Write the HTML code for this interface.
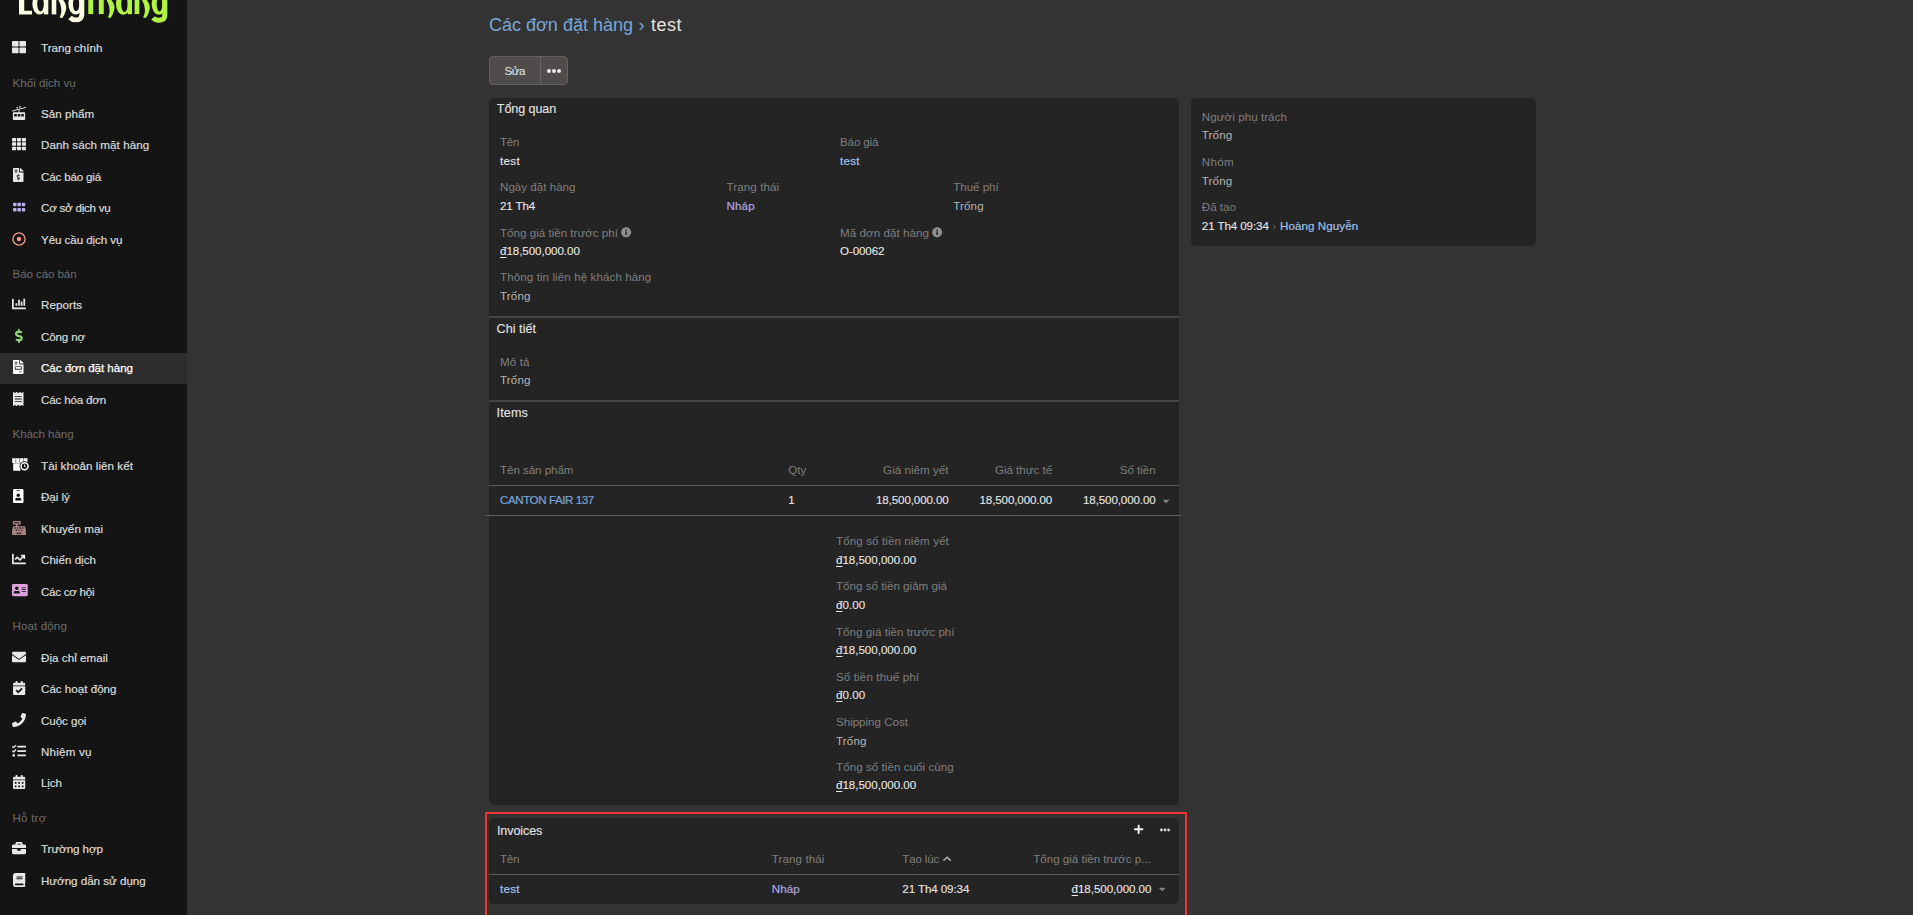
<!DOCTYPE html>
<html lang="vi"><head><meta charset="utf-8"><title>Các đơn đặt hàng › test</title>
<style>
html,body{margin:0;padding:0}
body{width:1913px;height:915px;overflow:hidden;background:#333333;position:relative;font-family:'Liberation Sans', sans-serif;font-size:11px}
.t{position:absolute;white-space:nowrap;line-height:1;}
.b{position:absolute}
svg{position:absolute;overflow:visible}
</style></head><body>
<div class="b" style="left:0;top:0;width:187px;height:915px;background:#141414"></div>
<div class="b" style="left:0;top:353px;width:187px;height:31px;background:#2c2c2c"></div>
<!-- button -->
<div class="b" style="left:488.6px;top:56.4px;width:79.4px;height:28.5px;box-sizing:border-box;background:#504c4b;border:1px solid #64605e;border-radius:4px"></div>
<div class="b" style="left:540px;top:57px;width:1px;height:27.5px;background:#686462"></div>
<!-- panels -->
<div class="b" style="left:488.5px;top:98px;width:690.3px;height:706.8px;background:#242424;border-radius:5px"></div>
<div class="b" style="left:1191px;top:98px;width:345px;height:148px;background:#242424;border-radius:5px"></div>
<div class="b" style="left:488.5px;top:316px;width:690.3px;height:2px;background:#464242"></div>
<div class="b" style="left:488.5px;top:400px;width:690.3px;height:2px;background:#464242"></div>
<div class="b" style="left:488.5px;top:485px;width:690.3px;height:1px;background:#625a5a"></div>
<div class="b" style="left:485.3px;top:515px;width:695.7px;height:1px;background:#625a5a"></div>
<!-- invoices -->
<div class="b" style="left:485px;top:811.8px;width:701.5px;height:120px;box-sizing:border-box;border:2.2px solid #f23434"></div>
<div class="b" style="left:488.5px;top:818.2px;width:690.3px;height:85.9px;background:#242424;border-radius:5px"></div>
<div class="b" style="left:488.5px;top:874px;width:690.3px;height:1px;background:#625a5a"></div>
<svg style="left:11.70px;top:39.70px;color:#e8e8e8" width="14.00" height="14" viewBox="0 0 512 512" fill="currentColor"><rect x="0" y="32" width="240" height="208" rx="24"/><rect x="272" y="32" width="240" height="208" rx="24"/><rect x="0" y="272" width="240" height="208" rx="24"/><rect x="272" y="272" width="240" height="208" rx="24"/></svg>
<svg style="left:11.70px;top:105.70px;color:#e8e8e8" width="14.00" height="14" viewBox="0 0 512 512" fill="currentColor"><path d="M288 64c17.700 0 32-14.300 32-32S305.700 0 288 0s-32 14.300-32 32 14.300 32 32 32zm223.500-12.100c-2.300-8.600-11-13.600-19.600-11.300l-480 128c-8.500 2.300-13.600 11-11.300 19.600C2.500 195.300 8.900 200 16 200c1.400 0 2.800-.200 4.100-.500L240 140.800V224H64c-17.700 0-32 14.300-32 32v224c0 17.700 14.300 32 32 32h384c17.700 0 32-14.300 32-32V256c0-17.700-14.300-32-32-32H272v-91.700l228.100-60.800c8.600-2.300 13.600-11.100 11.400-19.600zM176 384H80v-96h96v96zm160-96h96v96h-96v-96zm-32 0v96h-96v-96h96zM192 96c17.700 0 32-14.300 32-32s-14.300-32-32-32-32 14.300-32 32 14.300 32 32 32z"/></svg>
<svg style="left:11.70px;top:136.70px;color:#e8e8e8" width="14.00" height="14" viewBox="0 0 512 512" fill="currentColor"><rect x="0" y="32" width="149.33" height="128" rx="24"/><rect x="0" y="192" width="149.33" height="128" rx="24"/><rect x="0" y="352" width="149.33" height="128" rx="24"/><rect x="181.33" y="32" width="149.33" height="128" rx="24"/><rect x="181.33" y="192" width="149.33" height="128" rx="24"/><rect x="181.33" y="352" width="149.33" height="128" rx="24"/><rect x="362.67" y="32" width="149.33" height="128" rx="24"/><rect x="362.67" y="192" width="149.33" height="128" rx="24"/><rect x="362.67" y="352" width="149.33" height="128" rx="24"/></svg>
<svg style="left:13.45px;top:168.10px;color:#e8e8e8" width="10.50" height="14" viewBox="0 0 384 512" fill="currentColor"><path d="M377 105L279.100 7c-4.500-4.500-10.600-7-17-7H256v128h128v-6.100c0-6.300-2.500-12.400-7-16.900zm-153 31V0H24C10.700 0 0 10.700 0 24v464c0 13.300 10.700 24 24 24h336c13.300 0 24-10.700 24-24V160H248c-13.200 0-24-10.800-24-24zM64 72c0-4.400 3.600-8 8-8h80c4.400 0 8 3.600 8 8v16c0 4.400-3.600 8-8 8H72c-4.400 0-8-3.600-8-8V72zm0 80v-16c0-4.400 3.600-8 8-8h80c4.400 0 8 3.600 8 8v16c0 4.400-3.600 8-8 8H72c-4.400 0-8-3.600-8-8zm144 263.900V440c0 4.400-3.600 8-8 8h-16c-4.400 0-8-3.600-8-8v-24.300c-11.300-.600-22.300-4.500-31.400-11.300-3.900-2.900-4.100-8.800-.600-12.100l11.800-11.200c2.800-2.600 6.900-2.800 10.100-.700 3.900 2.400 8.300 3.700 12.800 3.700h28.100c6.500 0 11.800-5.900 11.800-13.200 0-6-3.600-11.200-8.800-12.700l-45-13.500c-18.600-5.600-31.600-23.400-31.600-43.400 0-24.500 19.100-44.400 42.700-45.100V232c0-4.400 3.600-8 8-8h16c4.400 0 8 3.600 8 8v24.300c11.300.600 22.300 4.500 31.400 11.300 3.900 2.900 4.100 8.800.600 12.100l-11.800 11.200c-2.800 2.600-6.900 2.800-10.100.700-3.900-2.400-8.300-3.700-12.800-3.700h-28.100c-6.500 0-11.800 5.900-11.800 13.200 0 6 3.600 11.200 8.800 12.700l45 13.500c18.600 5.600 31.600 23.400 31.600 43.400 0 24.500-19.100 44.400-42.700 45.200z"/></svg>
<svg style="left:12.57px;top:199.70px;color:#b9aef2" width="12.25" height="14" viewBox="0 0 448 512" fill="currentColor"><rect x="0" y="96" width="128" height="128" rx="32"/><rect x="0" y="288" width="128" height="128" rx="32"/><rect x="160" y="96" width="128" height="128" rx="32"/><rect x="160" y="288" width="128" height="128" rx="32"/><rect x="320" y="96" width="128" height="128" rx="32"/><rect x="320" y="288" width="128" height="128" rx="32"/></svg>
<svg style="left:11.70px;top:231.70px;color:#f2998e" width="14.00" height="14" viewBox="0 0 512 512" fill="currentColor"><circle cx="256" cy="256" r="224" fill="none" stroke="currentColor" stroke-width="48"/><circle cx="256" cy="256" r="80"/></svg>
<svg style="left:11.70px;top:296.70px;color:#e8e8e8" width="14.00" height="14" viewBox="0 0 512 512" fill="currentColor"><path d="M332.800 320h38.400c6.400 0 12.800-6.400 12.800-12.800V172.800c0-6.400-6.400-12.800-12.800-12.800h-38.400c-6.400 0-12.800 6.400-12.800 12.800v134.400c0 6.400 6.400 12.800 12.800 12.800zm96 0h38.400c6.400 0 12.800-6.400 12.800-12.800V76.800c0-6.400-6.400-12.800-12.800-12.800h-38.400c-6.400 0-12.800 6.400-12.800 12.800v230.400c0 6.400 6.400 12.800 12.800 12.800zm-288 0h38.400c6.400 0 12.800-6.400 12.800-12.800v-70.400c0-6.400-6.400-12.800-12.800-12.800h-38.400c-6.400 0-12.800 6.400-12.800 12.800v70.400c0 6.400 6.400 12.800 12.800 12.800zm96 0h38.400c6.400 0 12.800-6.400 12.800-12.800V108.800c0-6.400-6.400-12.800-12.800-12.800h-38.400c-6.400 0-12.800 6.400-12.800 12.800v198.400c0 6.400 6.400 12.800 12.800 12.800zM496 384H64V80c0-8.840-7.160-16-16-16H16C7.160 64 0 71.160 0 80v336c0 17.670 14.330 32 32 32h464c8.840 0 16-7.160 16-16v-32c0-8.840-7.160-16-16-16z"/></svg>
<svg style="left:14.76px;top:328.70px;color:#8fd878" width="7.88" height="14" viewBox="0 0 288 512" fill="currentColor"><path d="M209.200 233.400l-108-31.600C88.700 198.200 80 186.500 80 173.500c0-16.300 13.200-29.500 29.500-29.500h66.300c12.200 0 24.200 3.700 34.200 10.500 6.100 4.100 14.300 3.100 19.500-2l34.800-34c7.100-6.900 6.100-18.400-1.800-24.500C238 74.800 207.400 64.100 176 64V16c0-8.800-7.200-16-16-16h-32c-8.800 0-16 7.200-16 16v48h-2.500C45.800 64-5.400 118.700.5 183.600c4.200 46.100 39.400 83.600 83.800 96.600l102.500 30c12.500 3.700 21.200 15.300 21.200 28.300 0 16.300-13.200 29.500-29.500 29.500h-66.300C100 368 88 364.300 78 357.500c-6.100-4.100-14.300-3.100-19.500 2l-34.800 34c-7.100 6.900-6.100 18.400 1.800 24.500 24.500 19.200 55.100 29.900 86.500 30v48c0 8.800 7.200 16 16 16h32c8.800 0 16-7.200 16-16v-48.200c46.600-.9 90.300-28.600 105.700-72.700 21.500-61.600-14.600-124.800-72.500-141.700z"/></svg>
<svg style="left:13.45px;top:359.70px;color:#ffffff" width="10.50" height="14" viewBox="0 0 384 512" fill="currentColor"><path d="M288 256H96v64h192v-64zm89-151L279.100 7c-4.500-4.500-10.600-7-17-7H256v128h128v-6.100c0-6.300-2.500-12.400-7-16.900zm-153 31V0H24C10.700 0 0 10.700 0 24v464c0 13.300 10.700 24 24 24h336c13.300 0 24-10.700 24-24V160H248c-13.200 0-24-10.800-24-24zM64 72c0-4.420 3.580-8 8-8h80c4.420 0 8 3.580 8 8v16c0 4.420-3.580 8-8 8H72c-4.420 0-8-3.580-8-8V72zm0 64c0-4.420 3.580-8 8-8h80c4.420 0 8 3.580 8 8v16c0 4.420-3.580 8-8 8H72c-4.420 0-8-3.580-8-8v-16zm256 304c0 4.420-3.580 8-8 8h-80c-4.420 0-8-3.580-8-8v-16c0-4.420 3.580-8 8-8h80c4.420 0 8 3.580 8 8v16zm0-200v96c0 8.840-7.160 16-16 16H80c-8.840 0-16-7.160-16-16v-96c0-8.840 7.160-16 16-16h224c8.840 0 16 7.160 16 16z"/></svg>
<svg style="left:13.45px;top:391.70px;color:#e8e8e8" width="10.50" height="14" viewBox="0 0 384 512" fill="currentColor"><path d="M358.400 3.200L320 48 265.600 3.200a15.900 15.900 0 0 0-19.200 0L192 48 137.600 3.200a15.900 15.900 0 0 0-19.200 0L64 48 25.600 3.200C15-4.700 0 2.800 0 16v480c0 13.200 15 20.700 25.600 12.800L64 464l54.400 44.800a15.900 15.900 0 0 0 19.200 0L192 464l54.400 44.800a15.900 15.900 0 0 0 19.200 0L320 464l38.400 44.800c10.500 7.900 25.600.4 25.600-12.800V16c0-13.200-15-20.700-25.600-12.800zM320 360c0 4.400-3.600 8-8 8H72c-4.400 0-8-3.600-8-8v-16c0-4.400 3.600-8 8-8h240c4.400 0 8 3.600 8 8v16zm0-96c0 4.400-3.600 8-8 8H72c-4.400 0-8-3.600-8-8v-16c0-4.400 3.600-8 8-8h240c4.400 0 8 3.600 8 8v16zm0-96c0 4.400-3.600 8-8 8H72c-4.400 0-8-3.600-8-8v-16c0-4.400 3.600-8 8-8h240c4.400 0 8 3.600 8 8v16z"/></svg>
<svg style="left:11.60px;top:457.70px;color:#ffffff" width="17.50" height="14" viewBox="0 0 640 512" fill="currentColor"><path d="M8 13h126v150a24 24 0 0 1-24 24H32a24 24 0 0 1-24-24z M152 13h126v150a24 24 0 0 1-24 24h-78a24 24 0 0 1-24-24z M296 13h126v150a24 24 0 0 1-24 24h-78a24 24 0 0 1-24-24z M440 13h126v150a24 24 0 0 1-24 24h-78a24 24 0 0 1-24-24z"/><path d="M44 196h270v252a16 16 0 0 1-16 16H60a16 16 0 0 1-16-16z"/><circle cx="460" cy="304" r="186" fill="#141414"/><circle cx="460" cy="304" r="128" fill="none" stroke="currentColor" stroke-width="54"/><path d="M444 238h32v58l36 28-20 24-48-38z"/></svg>
<svg style="left:13.45px;top:488.70px;color:#ffffff" width="10.50" height="14" viewBox="0 0 384 512" fill="currentColor"><path d="M336 0H48C21.500 0 0 21.500 0 48v416c0 26.500 21.500 48 48 48h288c26.500 0 48-21.500 48-48V48c0-26.500-21.500-48-48-48zM144 32h96c8.800 0 16 7.200 16 16s-7.200 16-16 16h-96c-8.800 0-16-7.200-16-16s7.200-16 16-16zm48 128c35.300 0 64 28.700 64 64s-28.700 64-64 64-64-28.700-64-64 28.700-64 64-64zm112 236.800c0 10.600-10 19.200-22.400 19.200H102.400C90 416 80 407.400 80 396.800v-19.200c0-31.800 30.100-57.600 67.200-57.600h5c12.300 5.100 25.700 8 39.800 8s27.600-2.900 39.800-8h5c37.100 0 67.200 25.800 67.200 57.600v19.200z"/></svg>
<svg style="left:11.70px;top:520.70px;color:#a98282" width="14.00" height="14" viewBox="0 0 512 512" fill="currentColor"><path d="M511.100 378.800l-26.700-160c-2.600-15.400-15.900-26.700-31.600-26.700H208v-64h96c8.800 0 16-7.200 16-16V16c0-8.800-7.200-16-16-16H48c-8.800 0-16 7.200-16 16v96c0 8.800 7.200 16 16 16h96v64H59.100c-15.600 0-29 11.300-31.600 26.700L.8 378.700c-.6 3.500-.9 7-.9 10.500V480c0 17.700 14.300 32 32 32h448c17.700 0 32-14.300 32-32v-90.700c.1-3.500-.2-7-.8-10.500zM280 248c0-8.800 7.200-16 16-16h16c8.800 0 16 7.200 16 16v16c0 8.800-7.200 16-16 16h-16c-8.800 0-16-7.200-16-16v-16zm-32 64h16c8.800 0 16 7.200 16 16v16c0 8.800-7.200 16-16 16h-16c-8.800 0-16-7.200-16-16v-16c0-8.800 7.200-16 16-16zm-32-80c8.800 0 16 7.200 16 16v16c0 8.800-7.200 16-16 16h-16c-8.800 0-16-7.200-16-16v-16c0-8.800 7.200-16 16-16h16zM80 80V48h192v32H80zm40 200h-16c-8.800 0-16-7.200-16-16v-16c0-8.800 7.200-16 16-16h16c8.800 0 16 7.200 16 16v16c0 8.800-7.200 16-16 16zm16 64v-16c0-8.800 7.200-16 16-16h16c8.800 0 16 7.200 16 16v16c0 8.800-7.200 16-16 16h-16c-8.800 0-16-7.200-16-16zm216 112c0 4.400-3.600 8-8 8H168c-4.400 0-8-3.600-8-8v-16c0-4.400 3.600-8 8-8h176c4.400 0 8 3.600 8 8v16zm24-112c0 8.800-7.200 16-16 16h-16c-8.800 0-16-7.200-16-16v-16c0-8.800 7.200-16 16-16h16c8.800 0 16 7.200 16 16v16zm48-80c0 8.800-7.200 16-16 16h-16c-8.800 0-16-7.200-16-16v-16c0-8.800 7.200-16 16-16h16c8.800 0 16 7.200 16 16v16z"/></svg>
<svg style="left:11.70px;top:551.70px;color:#e8e8e8" width="14.00" height="14" viewBox="0 0 512 512" fill="currentColor"><path d="M496 384H64V80c0-8.840-7.160-16-16-16H16C7.160 64 0 71.160 0 80v336c0 17.670 14.330 32 32 32h464c8.840 0 16-7.160 16-16v-32c0-8.840-7.160-16-16-16zM464 96H345.940c-21.380 0-32.090 25.850-16.970 40.970l32.400 32.400L288 242.750l-73.370-73.370c-12.500-12.500-32.760-12.500-45.250 0l-68.690 68.690c-6.250 6.250-6.250 16.380 0 22.630l22.620 22.620c6.250 6.250 16.380 6.250 22.630 0L192 237.250l73.370 73.370c12.500 12.500 32.760 12.500 45.250 0l96-96 32.400 32.400c15.120 15.120 40.970 4.410 40.970-16.970V112c.01-8.840-7.150-16-15.990-16z"/></svg>
<svg style="left:11.73px;top:583.10px;color:#dda0dd" width="15.75" height="14" viewBox="0 0 576 512" fill="currentColor"><path d="M528 32H48C21.500 32 0 53.500 0 80v352c0 26.500 21.500 48 48 48h480c26.500 0 48-21.500 48-48V80c0-26.500-21.500-48-48-48zm-352 96c35.300 0 64 28.700 64 64s-28.700 64-64 64-64-28.700-64-64 28.700-64 64-64zm112 236.800c0 10.600-10 19.200-22.400 19.200H86.400C74 384 64 375.400 64 364.800v-19.200c0-31.800 30.100-57.600 67.200-57.600h5c12.300 5.100 25.700 8 39.800 8s27.600-2.900 39.800-8h5c37.100 0 67.200 25.800 67.200 57.600v19.200zM512 312c0 4.400-3.600 8-8 8H360c-4.400 0-8-3.600-8-8v-16c0-4.400 3.600-8 8-8h144c4.400 0 8 3.600 8 8v16zm0-64c0 4.400-3.600 8-8 8H360c-4.400 0-8-3.600-8-8v-16c0-4.400 3.600-8 8-8h144c4.400 0 8 3.600 8 8v16zm0-64c0 4.400-3.600 8-8 8H360c-4.400 0-8-3.600-8-8v-16c0-4.400 3.600-8 8-8h144c4.400 0 8 3.600 8 8v16z"/></svg>
<svg style="left:11.70px;top:649.70px;color:#e8e8e8" width="14.00" height="14" viewBox="0 0 512 512" fill="currentColor"><path d="M502.300 190.800c3.900-3.100 9.700-.2 9.700 4.700V400c0 26.500-21.500 48-48 48H48c-26.500 0-48-21.500-48-48V195.600c0-5 5.700-7.800 9.700-4.700 22.400 17.400 52.100 39.500 154.100 113.600 21.100 15.400 56.700 47.800 92.200 47.600 35.700.3 72-32.800 92.300-47.600 102-74.100 131.600-96.300 154-113.700zM256 320c23.200.4 56.600-29.200 73.400-41.400 132.700-96.300 142.800-104.700 173.400-128.700 5.800-4.500 9.200-11.500 9.200-18.900v-19c0-26.500-21.500-48-48-48H48C21.500 64 0 85.500 0 112v19c0 7.400 3.400 14.300 9.200 18.900 30.600 23.900 40.700 32.400 173.400 128.700 16.800 12.200 50.200 41.800 73.400 41.400z"/></svg>
<svg style="left:12.57px;top:680.70px;color:#e8e8e8" width="12.25" height="14" viewBox="0 0 448 512" fill="currentColor"><path d="M436 160H12c-6.627 0-12-5.373-12-12v-36c0-26.510 21.490-48 48-48h48V12c0-6.627 5.373-12 12-12h40c6.627 0 12 5.373 12 12v52h128V12c0-6.627 5.373-12 12-12h40c6.627 0 12 5.373 12 12v52h48c26.510 0 48 21.490 48 48v36c0 6.627-5.373 12-12 12zM12 192h424c6.627 0 12 5.373 12 12v260c0 26.510-21.490 48-48 48H48c-26.510 0-48-21.490-48-48V204c0-6.627 5.373-12 12-12zm333.296 95.947l-28.169-28.398c-4.667-4.705-12.265-4.736-16.970-.068L194.120 364.665l-45.980-46.352c-4.667-4.705-12.266-4.736-16.971-.068l-28.397 28.170c-4.705 4.667-4.736 12.265-.068 16.970l82.601 83.269c4.667 4.705 12.265 4.736 16.970.068l142.953-141.805c4.705-4.667 4.736-12.265.068-16.970z"/></svg>
<svg style="left:11.70px;top:712.70px;color:#e8e8e8" width="14.00" height="14" viewBox="0 0 512 512" fill="currentColor"><path d="M493.400 24.600l-104-24c-11.300-2.600-22.900 3.300-27.500 13.900l-48 112c-4.200 9.800-1.400 21.300 6.900 28l60.600 49.600c-36 76.700-98.900 140.500-177.200 177.200l-49.600-60.600c-6.800-8.300-18.200-11.100-28-6.900l-112 48C3.900 366.500-2 378.100.6 389.400l24 104C27.100 504.200 36.700 512 48 512c256.100 0 464-207.500 464-464 0-11.200-7.700-20.900-18.600-23.400z"/></svg>
<svg style="left:11.70px;top:743.70px;color:#e8e8e8" width="14.00" height="14" viewBox="0 0 512 512" fill="currentColor"><path d="M139.610 35.500a12 12 0 0 0-17 0L58.930 98.810l-22.700-22.120a12 12 0 0 0-17 0L3.530 92.410a12 12 0 0 0 0 17l47.590 47.400a12.780 12.780 0 0 0 17.610 0l15.590-15.620L156.520 69a12.090 12.090 0 0 0 .09-17zm0 159.190a12 12 0 0 0-17 0l-63.680 63.720-22.700-22.100a12 12 0 0 0-17 0L3.530 252a12 12 0 0 0 0 17L51 316.500a12.770 12.770 0 0 0 17.600 0l15.700-15.690 72.200-72.220a12 12 0 0 0 .09-16.900zM64 368c-26.490 0-48.590 21.500-48.590 48S37.530 464 64 464a48 48 0 0 0 0-96zm432 16H208a16 16 0 0 0-16 16v32a16 16 0 0 0 16 16h288a16 16 0 0 0 16-16v-32a16 16 0 0 0-16-16zm0-320H208a16 16 0 0 0-16 16v32a16 16 0 0 0 16 16h288a16 16 0 0 0 16-16V80a16 16 0 0 0-16-16zm0 160H208a16 16 0 0 0-16 16v32a16 16 0 0 0 16 16h288a16 16 0 0 0 16-16v-32a16 16 0 0 0-16-16z"/></svg>
<svg style="left:12.57px;top:774.70px;color:#e8e8e8" width="12.25" height="14" viewBox="0 0 448 512" fill="currentColor"><path d="M0 464c0 26.500 21.500 48 48 48h352c26.500 0 48-21.500 48-48V192H0v272zm320-196c0-6.600 5.400-12 12-12h40c6.600 0 12 5.400 12 12v40c0 6.600-5.400 12-12 12h-40c-6.600 0-12-5.400-12-12v-40zm0 128c0-6.600 5.400-12 12-12h40c6.600 0 12 5.400 12 12v40c0 6.600-5.400 12-12 12h-40c-6.600 0-12-5.400-12-12v-40zM192 268c0-6.600 5.400-12 12-12h40c6.600 0 12 5.400 12 12v40c0 6.600-5.400 12-12 12h-40c-6.600 0-12-5.400-12-12v-40zm0 128c0-6.600 5.400-12 12-12h40c6.600 0 12 5.400 12 12v40c0 6.600-5.400 12-12 12h-40c-6.600 0-12-5.400-12-12v-40zM64 268c0-6.600 5.400-12 12-12h40c6.600 0 12 5.400 12 12v40c0 6.600-5.400 12-12 12H76c-6.600 0-12-5.400-12-12v-40zm0 128c0-6.600 5.400-12 12-12h40c6.600 0 12 5.400 12 12v40c0 6.600-5.400 12-12 12H76c-6.600 0-12-5.400-12-12v-40zM400 64h-48V16c0-8.800-7.200-16-16-16h-32c-8.800 0-16 7.200-16 16v48H160V16c0-8.800-7.200-16-16-16h-32c-8.800 0-16 7.200-16 16v48H48C21.500 64 0 85.500 0 112v48h448v-48c0-26.500-21.500-48-48-48z"/></svg>
<svg style="left:11.70px;top:840.70px;color:#e8e8e8" width="14.00" height="14" viewBox="0 0 512 512" fill="currentColor"><path d="M320 336c0 8.840-7.160 16-16 16h-96c-8.840 0-16-7.160-16-16v-48H0v144c0 25.600 22.400 48 48 48h416c25.600 0 48-22.400 48-48V288H320v48zm144-208h-80V80c0-25.600-22.400-48-48-48H176c-25.600 0-48 22.400-48 48v48H48c-25.600 0-48 22.400-48 48v80h512v-80c0-25.600-22.400-48-48-48zm-144 0H192V96h128v32z"/></svg>
<svg style="left:12.57px;top:872.70px;color:#e8e8e8" width="12.25" height="14" viewBox="0 0 448 512" fill="currentColor"><path d="M448 360V24c0-13.300-10.700-24-24-24H96C43 0 0 43 0 96v320c0 53 43 96 96 96h328c13.300 0 24-10.700 24-24v-16c0-7.500-3.500-14.300-8.900-18.700-4.200-15.400-4.200-59.300 0-74.700 5.400-4.300 8.900-11.100 8.900-18.600zM128 134c0-3.300 2.700-6 6-6h212c3.300 0 6 2.700 6 6v20c0 3.300-2.700 6-6 6H134c-3.300 0-6-2.700-6-6v-20zm0 64c0-3.300 2.700-6 6-6h212c3.300 0 6 2.700 6 6v20c0 3.300-2.700 6-6 6H134c-3.300 0-6-2.700-6-6v-20zm253.400 250H96c-17.700 0-32-14.300-32-32 0-17.600 14.400-32 32-32h285.400c-1.900 17.100-1.900 46.900 0 64z"/></svg>
<svg style="left:620.85px;top:227.00px;color:#8f8f8f" width="10.30" height="10.3" viewBox="0 0 512 512" fill="currentColor"><path d="M256 8C119.043 8 8 119.083 8 256c0 136.997 111.043 248 248 248s248-111.003 248-248C504 119.083 392.957 8 256 8zm0 110c23.196 0 42 18.804 42 42s-18.804 42-42 42-42-18.804-42-42 18.804-42 42-42zm56 254c0 6.627-5.373 12-12 12h-88c-6.627 0-12-5.373-12-12v-24c0-6.627 5.373-12 12-12h12v-64h-12c-6.627 0-12-5.373-12-12v-24c0-6.627 5.373-12 12-12h64c6.627 0 12 5.373 12 12v100h12c6.627 0 12 5.373 12 12v24z"/></svg>
<svg style="left:932.15px;top:227.00px;color:#8f8f8f" width="10.30" height="10.3" viewBox="0 0 512 512" fill="currentColor"><path d="M256 8C119.043 8 8 119.083 8 256c0 136.997 111.043 248 248 248s248-111.003 248-248C504 119.083 392.957 8 256 8zm0 110c23.196 0 42 18.804 42 42s-18.804 42-42 42-42-18.804-42-42 18.804-42 42-42zm56 254c0 6.627-5.373 12-12 12h-88c-6.627 0-12-5.373-12-12v-24c0-6.627 5.373-12 12-12h12v-64h-12c-6.627 0-12-5.373-12-12v-24c0-6.627 5.373-12 12-12h64c6.627 0 12 5.373 12 12v100h12c6.627 0 12 5.373 12 12v24z"/></svg>
<svg style="left:547.00px;top:63.80px;color:#ececec" width="14.00" height="14" viewBox="0 0 512 512" fill="currentColor"><circle cx="256" cy="256" r="72"/><circle cx="72" cy="256" r="72"/><circle cx="440" cy="256" r="72"/></svg>
<svg style="left:1163.47px;top:495.50px;color:#858585" width="6.25" height="10" viewBox="0 0 320 512" fill="currentColor"><path d="M31.300 192h257.300c17.800 0 26.700 21.500 14.100 34.100L174.100 354.800c-7.800 7.800-20.500 7.800-28.300 0L17.200 226.100C4.600 213.500 13.500 192 31.300 192z"/></svg>
<svg style="left:1159.47px;top:884.20px;color:#858585" width="6.25" height="10" viewBox="0 0 320 512" fill="currentColor"><path d="M31.300 192h257.300c17.800 0 26.700 21.500 14.100 34.100L174.100 354.800c-7.800 7.800-20.500 7.800-28.300 0L17.200 226.100C4.600 213.500 13.500 192 31.300 192z"/></svg>
<svg style="left:1133.76px;top:824.30px;color:#f0f0f0" width="9.28" height="10.6" viewBox="0 0 448 512" fill="currentColor"><path d="M416 208H272V64c0-17.670-14.330-32-32-32h-32c-17.670 0-32 14.330-32 32v144H32c-17.670 0-32 14.330-32 32v32c0 17.670 14.330 32 32 32h144v144c0 17.670 14.330 32 32 32h32c17.670 0 32-14.330 32-32V304h144c17.670 0 32-14.330 32-32v-32c0-17.670-14.330-32-32-32z"/></svg>
<svg style="left:1159.80px;top:824.80px;color:#d8d8d8" width="10.00" height="10" viewBox="0 0 512 512" fill="currentColor"><circle cx="256" cy="256" r="72"/><circle cx="72" cy="256" r="72"/><circle cx="440" cy="256" r="72"/></svg>
<svg style="left:942.84px;top:854.00px;color:#b0b0b0" width="8.31" height="9.5" viewBox="0 0 448 512" fill="currentColor"><path d="M240.971 130.524l194.343 194.343c9.373 9.373 9.373 24.569 0 33.941l-22.667 22.667c-9.357 9.357-24.522 9.375-33.901.04L224 227.495 69.255 381.516c-9.379 9.335-24.544 9.317-33.901-.04l-22.667-22.667c-9.373-9.373-9.373-24.569 0-33.941L207.030 130.525c9.372-9.373 24.568-9.373 33.941-.001z"/></svg>
<svg style="left:0;top:0" width="187" height="26" viewBox="0 0 187 26"><path fill="#fcfce2" d="M19,-2H24.25V10.7H32V14.4H19Z"/><ellipse cx="39.5" cy="4" rx="7.1" ry="10.6" fill="#fcfce2"/><ellipse cx="40.55" cy="4" rx="3.35" ry="7.5" fill="#141414"/><rect x="43.9" y="-2" width="4.4" height="16.4" fill="#fcfce2"/><rect x="51.7" y="-2" width="4.6" height="16.4" fill="#fcfce2"/><path transform="translate(58.35,0)" fill="#fcfce2" d="M-1.2,-2.5L0,0C1.6,3 2.4,5 2.6,7C3,9.5 3.2,11 2.9,12.5C2.5,14.5 1.9,16 1.2,17.6L3.9,17.9C5.4,16 6.4,14.3 6.8,12.5C7.6,10.5 8.1,8.8 7.9,7C7.5,4.2 6.3,1.8 4.9,0L3.6,-2.5Z"/><ellipse cx="75.6" cy="4" rx="7.2" ry="10.6" fill="#fcfce2"/><ellipse cx="76.15" cy="4" rx="3.15" ry="7.3" fill="#141414"/><path d="M81.85,-2V14C81.85,19 79,20 75.6,19.9C73,19.8 71.2,18.8 70,17.5" fill="none" stroke="#fcfce2" stroke-width="4.9"/><rect x="88.3" y="-2" width="4.9" height="16.1" fill="#b0f342"/><rect x="98.8" y="-2" width="4.95" height="16.1" fill="#b0f342"/><path transform="translate(106.6,0)" fill="#b0f342" d="M-1.2,-2.5L0,0C1.6,3 2.4,5 2.6,7C3,9.5 3.2,11 2.9,12.5C2.5,14.5 1.9,16 1.2,17.6L3.9,17.9C5.4,16 6.4,14.3 6.8,12.5C7.6,10.5 8.1,8.8 7.9,7C7.5,4.2 6.3,1.8 4.9,0L3.6,-2.5Z"/><ellipse cx="123.2" cy="4" rx="7.2" ry="10.8" fill="#b0f342"/><ellipse cx="124.45" cy="4" rx="3.25" ry="8" fill="#141414"/><rect x="127.7" y="-2" width="4.3" height="16.2" fill="#b0f342"/><rect x="134.6" y="-2" width="4.7" height="16.1" fill="#b0f342"/><path transform="translate(141.9,0)" fill="#b0f342" d="M-1.2,-2.5L0,0C1.6,3 2.4,5 2.6,7C3,9.5 3.2,11 2.9,12.5C2.5,14.5 1.9,16 1.2,17.6L3.9,17.9C5.4,16 6.4,14.3 6.8,12.5C7.6,10.5 8.1,8.8 7.9,7C7.5,4.2 6.3,1.8 4.9,0L3.6,-2.5Z"/><ellipse cx="158.9" cy="4" rx="7.2" ry="10.8" fill="#b0f342"/><ellipse cx="159.5" cy="4" rx="2.8" ry="7.5" fill="#141414"/><path d="M164.8,-2V14.5C164.8,19.6 162,20.4 158.6,20.3C156,20.2 154.3,19.1 153.2,17.7" fill="none" stroke="#b0f342" stroke-width="5"/></svg>
<span class="t" style="left:41.00px;top:42.18px;font-size:11.6px;color:#dcdcdc;-webkit-text-stroke:0.2px #dcdcdc;">Trang chính</span>
<span class="t" style="left:12.50px;top:77.18px;font-size:11.6px;color:#6c6c6c;letter-spacing:0.011px;">Khối dịch vụ</span>
<span class="t" style="left:41.00px;top:108.18px;font-size:11.6px;color:#dcdcdc;letter-spacing:0.055px;-webkit-text-stroke:0.2px #dcdcdc;">Sản phẩm</span>
<span class="t" style="left:41.00px;top:139.18px;font-size:11.6px;color:#dcdcdc;letter-spacing:0.072px;-webkit-text-stroke:0.2px #dcdcdc;">Danh sách mặt hàng</span>
<span class="t" style="left:41.00px;top:170.58px;font-size:11.6px;color:#dcdcdc;letter-spacing:-0.170px;-webkit-text-stroke:0.2px #dcdcdc;">Các báo giá</span>
<span class="t" style="left:41.00px;top:202.18px;font-size:11.6px;color:#dcdcdc;letter-spacing:-0.228px;-webkit-text-stroke:0.2px #dcdcdc;">Cơ sở dịch vụ</span>
<span class="t" style="left:41.00px;top:234.18px;font-size:11.6px;color:#dcdcdc;letter-spacing:-0.073px;-webkit-text-stroke:0.2px #dcdcdc;">Yêu cầu dịch vụ</span>
<span class="t" style="left:12.50px;top:268.18px;font-size:11.6px;color:#6c6c6c;letter-spacing:-0.101px;">Báo cáo bán</span>
<span class="t" style="left:41.00px;top:299.18px;font-size:11.6px;color:#dcdcdc;letter-spacing:0.084px;-webkit-text-stroke:0.2px #dcdcdc;">Reports</span>
<span class="t" style="left:41.00px;top:331.18px;font-size:11.6px;color:#dcdcdc;letter-spacing:-0.143px;-webkit-text-stroke:0.2px #dcdcdc;">Công nợ</span>
<span class="t" style="left:41.00px;top:362.18px;font-size:11.6px;color:#ffffff;letter-spacing:-0.044px;-webkit-text-stroke:0.25px #ffffff;">Các đơn đặt hàng</span>
<span class="t" style="left:41.00px;top:394.18px;font-size:11.6px;color:#dcdcdc;letter-spacing:-0.173px;-webkit-text-stroke:0.2px #dcdcdc;">Các hóa đơn</span>
<span class="t" style="left:12.50px;top:428.18px;font-size:11.6px;color:#6c6c6c;letter-spacing:-0.089px;">Khách hàng</span>
<span class="t" style="left:41.00px;top:460.18px;font-size:11.6px;color:#dcdcdc;letter-spacing:0.062px;-webkit-text-stroke:0.2px #dcdcdc;">Tài khoản liên kết</span>
<span class="t" style="left:41.00px;top:491.18px;font-size:11.6px;color:#dcdcdc;letter-spacing:-0.017px;-webkit-text-stroke:0.2px #dcdcdc;">Đại lý</span>
<span class="t" style="left:41.00px;top:523.18px;font-size:11.6px;color:#dcdcdc;letter-spacing:0.107px;-webkit-text-stroke:0.2px #dcdcdc;">Khuyến mại</span>
<span class="t" style="left:41.00px;top:554.18px;font-size:11.6px;color:#dcdcdc;letter-spacing:0.020px;-webkit-text-stroke:0.2px #dcdcdc;">Chiến dịch</span>
<span class="t" style="left:41.00px;top:585.58px;font-size:11.6px;color:#dcdcdc;letter-spacing:-0.264px;-webkit-text-stroke:0.2px #dcdcdc;">Các cơ hội</span>
<span class="t" style="left:12.50px;top:620.18px;font-size:11.6px;color:#6c6c6c;letter-spacing:0.109px;">Hoạt động</span>
<span class="t" style="left:41.00px;top:652.18px;font-size:11.6px;color:#dcdcdc;letter-spacing:0.048px;-webkit-text-stroke:0.2px #dcdcdc;">Địa chỉ email</span>
<span class="t" style="left:41.00px;top:683.18px;font-size:11.6px;color:#dcdcdc;letter-spacing:0.006px;-webkit-text-stroke:0.2px #dcdcdc;">Các hoạt động</span>
<span class="t" style="left:41.00px;top:715.18px;font-size:11.6px;color:#dcdcdc;letter-spacing:-0.058px;-webkit-text-stroke:0.2px #dcdcdc;">Cuộc gọi</span>
<span class="t" style="left:41.00px;top:746.18px;font-size:11.6px;color:#dcdcdc;letter-spacing:0.204px;-webkit-text-stroke:0.2px #dcdcdc;">Nhiệm vụ</span>
<span class="t" style="left:41.00px;top:777.18px;font-size:11.6px;color:#dcdcdc;letter-spacing:-0.095px;-webkit-text-stroke:0.2px #dcdcdc;">Lịch</span>
<span class="t" style="left:12.50px;top:812.18px;font-size:11.6px;color:#6c6c6c;letter-spacing:0.211px;">Hỗ trợ</span>
<span class="t" style="left:41.00px;top:843.18px;font-size:11.6px;color:#dcdcdc;letter-spacing:-0.060px;-webkit-text-stroke:0.2px #dcdcdc;">Trường hợp</span>
<span class="t" style="left:41.00px;top:875.18px;font-size:11.6px;color:#dcdcdc;letter-spacing:-0.018px;-webkit-text-stroke:0.2px #dcdcdc;">Hướng dẫn sử dụng</span>
<span class="t" style="left:489.00px;top:16.26px;font-size:18px;color:#79a6d8;letter-spacing:0.006px;">Các đơn đặt hàng</span>
<span class="t" style="left:638.50px;top:16.26px;font-size:18px;color:#79a6d8;">›</span>
<span class="t" style="left:651.00px;top:16.26px;font-size:18px;color:#e9e4dc;letter-spacing:0.496px;">test</span>
<span class="t" style="left:504.60px;top:65.18px;font-size:11.6px;color:#ececec;letter-spacing:-0.600px;">Sửa</span>
<span class="t" style="left:496.80px;top:103.33px;font-size:12.6px;color:#e4e4e4;letter-spacing:-0.104px;-webkit-text-stroke:0.1px #e4e4e4;">Tổng quan</span>
<span class="t" style="left:500.00px;top:136.18px;font-size:11.6px;color:#7f7f7f;letter-spacing:-0.228px;">Tên</span>
<span class="t" style="left:500.00px;top:155.18px;font-size:11.6px;color:#e9e9e9;letter-spacing:0.328px;-webkit-text-stroke:0.1px #e9e9e9;">test</span>
<span class="t" style="left:840.00px;top:136.18px;font-size:11.6px;color:#7f7f7f;letter-spacing:-0.147px;">Báo giá</span>
<span class="t" style="left:840.00px;top:155.18px;font-size:11.6px;color:#a2c3ec;letter-spacing:0.228px;-webkit-text-stroke:0.2px #a2c3ec;">test</span>
<span class="t" style="left:500.00px;top:181.18px;font-size:11.6px;color:#7f7f7f;letter-spacing:0.006px;">Ngày đặt hàng</span>
<span class="t" style="left:500.00px;top:200.18px;font-size:11.6px;color:#e9e9e9;letter-spacing:-0.132px;-webkit-text-stroke:0.1px #e9e9e9;">21 Th4</span>
<span class="t" style="left:726.50px;top:181.18px;font-size:11.6px;color:#7f7f7f;letter-spacing:0.102px;">Trạng thái</span>
<span class="t" style="left:726.50px;top:200.18px;font-size:11.6px;color:#b0a8e2;letter-spacing:0.120px;-webkit-text-stroke:0.2px #b0a8e2;">Nháp</span>
<span class="t" style="left:953.20px;top:181.18px;font-size:11.6px;color:#7f7f7f;letter-spacing:-0.033px;">Thuế phí</span>
<span class="t" style="left:953.20px;top:200.18px;font-size:11.6px;color:#b4b4b4;letter-spacing:0.148px;">Trống</span>
<span class="t" style="left:500.00px;top:227.18px;font-size:11.6px;color:#7f7f7f;letter-spacing:0.007px;">Tổng giá tiền trước phí</span>
<span class="t" style="left:500.00px;top:245.18px;font-size:11.6px;color:#e9e9e9;letter-spacing:-0.058px;-webkit-text-stroke:0.1px #e9e9e9;"><u style="text-underline-offset:1.5px;text-decoration-thickness:1px">đ</u>18,500,000.00</span>
<span class="t" style="left:840.00px;top:227.18px;font-size:11.6px;color:#7f7f7f;letter-spacing:0.061px;">Mã đơn đặt hàng</span>
<span class="t" style="left:840.00px;top:245.18px;font-size:11.6px;color:#e9e9e9;letter-spacing:-0.118px;-webkit-text-stroke:0.1px #e9e9e9;">O-00062</span>
<span class="t" style="left:500.00px;top:271.18px;font-size:11.6px;color:#7f7f7f;letter-spacing:0.089px;">Thông tin liên hệ khách hàng</span>
<span class="t" style="left:500.00px;top:290.18px;font-size:11.6px;color:#b4b4b4;letter-spacing:0.148px;">Trống</span>
<span class="t" style="left:496.50px;top:323.33px;font-size:12.6px;color:#e4e4e4;letter-spacing:0.050px;-webkit-text-stroke:0.1px #e4e4e4;">Chi tiết</span>
<span class="t" style="left:500.00px;top:356.18px;font-size:11.6px;color:#7f7f7f;letter-spacing:0.120px;">Mô tả</span>
<span class="t" style="left:500.00px;top:374.18px;font-size:11.6px;color:#b4b4b4;letter-spacing:0.148px;">Trống</span>
<span class="t" style="left:496.50px;top:407.33px;font-size:12.6px;color:#e4e4e4;letter-spacing:0.141px;-webkit-text-stroke:0.1px #e4e4e4;">Items</span>
<span class="t" style="left:500.00px;top:464.18px;font-size:11.6px;color:#7f7f7f;letter-spacing:-0.060px;">Tên sản phẩm</span>
<span class="t" style="left:788.20px;top:464.18px;font-size:11.6px;color:#7f7f7f;letter-spacing:-0.016px;">Qty</span>
<span class="t" style="left:883.10px;top:464.18px;font-size:11.6px;color:#7f7f7f;letter-spacing:0.034px;">Giá niêm yết</span>
<span class="t" style="left:994.90px;top:464.18px;font-size:11.6px;color:#7f7f7f;letter-spacing:-0.017px;">Giá thực tế</span>
<span class="t" style="left:1119.80px;top:464.18px;font-size:11.6px;color:#7f7f7f;letter-spacing:-0.044px;">Số tiền</span>
<span class="t" style="left:500.00px;top:494.18px;font-size:11.6px;color:#79a6d8;letter-spacing:-0.440px;-webkit-text-stroke:0.2px #79a6d8;">CANTON FAIR 137</span>
<span class="t" style="left:788.20px;top:494.18px;font-size:11.6px;color:#e9e9e9;-webkit-text-stroke:0.1px #e9e9e9;">1</span>
<span class="t" style="left:876.00px;top:494.18px;font-size:11.6px;color:#e9e9e9;letter-spacing:-0.120px;-webkit-text-stroke:0.1px #e9e9e9;">18,500,000.00</span>
<span class="t" style="left:979.50px;top:494.18px;font-size:11.6px;color:#e9e9e9;letter-spacing:-0.120px;-webkit-text-stroke:0.1px #e9e9e9;">18,500,000.00</span>
<span class="t" style="left:1083.00px;top:494.18px;font-size:11.6px;color:#e9e9e9;letter-spacing:-0.120px;-webkit-text-stroke:0.1px #e9e9e9;">18,500,000.00</span>
<span class="t" style="left:836.00px;top:535.18px;font-size:11.6px;color:#7f7f7f;letter-spacing:0.098px;">Tổng số tiền niêm yết</span>
<span class="t" style="left:836.00px;top:554.18px;font-size:11.6px;color:#e9e9e9;letter-spacing:-0.029px;-webkit-text-stroke:0.1px #e9e9e9;"><u style="text-underline-offset:1.5px;text-decoration-thickness:1px">đ</u>18,500,000.00</span>
<span class="t" style="left:836.00px;top:580.18px;font-size:11.6px;color:#7f7f7f;letter-spacing:0.007px;">Tổng số tiền giảm giá</span>
<span class="t" style="left:836.00px;top:599.18px;font-size:11.6px;color:#e9e9e9;letter-spacing:0.074px;-webkit-text-stroke:0.1px #e9e9e9;"><u style="text-underline-offset:1.5px;text-decoration-thickness:1px">đ</u>0.00</span>
<span class="t" style="left:836.00px;top:626.18px;font-size:11.6px;color:#7f7f7f;letter-spacing:0.033px;">Tổng giá tiền trước phí</span>
<span class="t" style="left:836.00px;top:644.18px;font-size:11.6px;color:#e9e9e9;letter-spacing:-0.029px;-webkit-text-stroke:0.1px #e9e9e9;"><u style="text-underline-offset:1.5px;text-decoration-thickness:1px">đ</u>18,500,000.00</span>
<span class="t" style="left:836.00px;top:671.18px;font-size:11.6px;color:#7f7f7f;letter-spacing:0.124px;">Số tiền thuế phí</span>
<span class="t" style="left:836.00px;top:689.18px;font-size:11.6px;color:#e9e9e9;letter-spacing:0.074px;-webkit-text-stroke:0.1px #e9e9e9;"><u style="text-underline-offset:1.5px;text-decoration-thickness:1px">đ</u>0.00</span>
<span class="t" style="left:836.00px;top:716.18px;font-size:11.6px;color:#7f7f7f;letter-spacing:-0.022px;">Shipping Cost</span>
<span class="t" style="left:836.00px;top:735.18px;font-size:11.6px;color:#b4b4b4;letter-spacing:0.148px;">Trống</span>
<span class="t" style="left:836.00px;top:761.18px;font-size:11.6px;color:#7f7f7f;letter-spacing:0.051px;">Tổng số tiền cuối cùng</span>
<span class="t" style="left:836.00px;top:779.18px;font-size:11.6px;color:#e9e9e9;letter-spacing:-0.029px;-webkit-text-stroke:0.1px #e9e9e9;"><u style="text-underline-offset:1.5px;text-decoration-thickness:1px">đ</u>18,500,000.00</span>
<span class="t" style="left:1201.80px;top:111.18px;font-size:11.6px;color:#7f7f7f;letter-spacing:0.058px;">Người phụ trách</span>
<span class="t" style="left:1201.80px;top:129.18px;font-size:11.6px;color:#b4b4b4;letter-spacing:0.148px;">Trống</span>
<span class="t" style="left:1201.80px;top:156.18px;font-size:11.6px;color:#7f7f7f;letter-spacing:0.316px;">Nhóm</span>
<span class="t" style="left:1201.80px;top:175.18px;font-size:11.6px;color:#b4b4b4;letter-spacing:0.148px;">Trống</span>
<span class="t" style="left:1201.80px;top:201.18px;font-size:11.6px;color:#7f7f7f;letter-spacing:-0.012px;">Đã tạo</span>
<span class="t" style="left:1201.80px;top:220.18px;font-size:11.6px;color:#e9e9e9;letter-spacing:-0.094px;-webkit-text-stroke:0.1px #e9e9e9;">21 Th4 09:34</span>
<span class="t" style="left:1272.30px;top:220.18px;font-size:11.6px;color:#6b6b6b;letter-spacing:0.125px;">›</span>
<span class="t" style="left:1280.10px;top:220.18px;font-size:11.6px;color:#9cc0ea;letter-spacing:0.062px;-webkit-text-stroke:0.2px #9cc0ea;">Hoàng Nguyễn</span>
<span class="t" style="left:497.00px;top:824.73px;font-size:12.6px;color:#e4e4e4;letter-spacing:-0.125px;-webkit-text-stroke:0.1px #e4e4e4;">Invoices</span>
<span class="t" style="left:500.00px;top:852.78px;font-size:11.6px;color:#7f7f7f;letter-spacing:-0.228px;">Tên</span>
<span class="t" style="left:771.70px;top:852.78px;font-size:11.6px;color:#7f7f7f;letter-spacing:0.102px;">Trạng thái</span>
<span class="t" style="left:902.30px;top:852.78px;font-size:11.6px;color:#7f7f7f;letter-spacing:-0.162px;">Tạo lúc</span>
<span class="t" style="left:1033.30px;top:852.78px;font-size:11.6px;color:#7f7f7f;letter-spacing:-0.018px;">Tổng giá tiền trước p...</span>
<span class="t" style="left:500.00px;top:883.18px;font-size:11.6px;color:#a2c3ec;letter-spacing:0.228px;-webkit-text-stroke:0.2px #a2c3ec;">test</span>
<span class="t" style="left:771.70px;top:883.18px;font-size:11.6px;color:#b0a8e2;letter-spacing:0.120px;-webkit-text-stroke:0.2px #b0a8e2;">Nháp</span>
<span class="t" style="left:902.30px;top:883.18px;font-size:11.6px;color:#e9e9e9;letter-spacing:-0.094px;-webkit-text-stroke:0.1px #e9e9e9;">21 Th4 09:34</span>
<span class="t" style="left:1071.60px;top:883.18px;font-size:11.6px;color:#e9e9e9;letter-spacing:-0.058px;-webkit-text-stroke:0.1px #e9e9e9;"><u style="text-underline-offset:1.5px;text-decoration-thickness:1px">đ</u>18,500,000.00</span>
</body></html>
